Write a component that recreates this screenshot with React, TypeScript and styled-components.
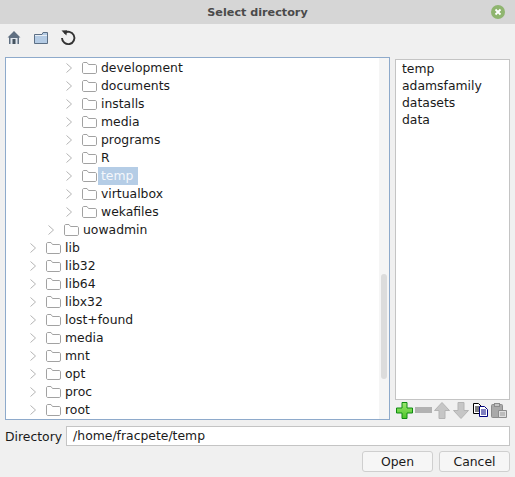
import React from "react";
import styled, { createGlobalStyle } from "styled-components";

const GlobalStyle = createGlobalStyle`
  html, body {
    margin: 0;
    padding: 0;
    background: #f0f0f0;
  }
  body {
    font-family: "DejaVu Sans", sans-serif;
    font-size: 12.4px;
    color: #1a1a1a;
  }
`;

const Dialog = styled.div`
  width: 515px;
  height: 477px;
  display: flex;
  flex-direction: column;
  overflow: hidden;
  background: #f0f0f0;
`;

const TitleBar = styled.div`
  height: 24px;
  flex: none;
  display: flex;
  align-items: center;
  justify-content: center;
  position: relative;
  background: #d6d6d6;
  font-size: 11.2px;
  font-weight: bold;
  color: #4a4a4a;
`;

const CloseButton = styled.svg`
  position: absolute;
  right: 10px;
  top: 5px;
`;

const Toolbar = styled.div`
  height: 33px;
  flex: none;
  display: flex;
  align-items: center;
  gap: 13px;
  padding-left: 7px;
  padding-bottom: 6px;
  box-sizing: border-box;
`;

const Main = styled.div`
  height: 363px;
  flex: none;
  display: flex;
  padding: 0 5px 0 5px;
  gap: 5px;
`;

const TreeBox = styled.div`
  width: 385px;
  flex: none;
  box-sizing: border-box;
  border: 1px solid #8eaacb;
  background: #fff;
  padding-top: 1px;
  position: relative;
  overflow: hidden;
`;

const Row = styled.div<{ $level: number }>`
  height: 18px;
  display: flex;
  align-items: center;
  padding-left: ${({ $level }) => 24 + ($level - 1) * 18}px;
`;

const Label = styled.span<{ $selected?: boolean }>`
  height: 18px;
  line-height: 18px;
  padding: 0 5px 0 3px;
  margin-left: 1px;
  ${({ $selected }) => $selected && "background: #b5cde6; color: #f4f7fb;"}
`;

const ScrollTrack = styled.div`
  position: absolute;
  top: 0;
  right: 0;
  bottom: 0;
  width: 10px;
  background: #f5f5f5;
`;

const ScrollThumb = styled.div`
  position: absolute;
  top: 216px;
  left: 2px;
  width: 6px;
  height: 105px;
  border-radius: 3px;
  background: #dcdcdc;
`;

const SidePanel = styled.div`
  flex: 1;
  min-width: 0;
  display: flex;
  flex-direction: column;
  padding-top: 2px;
`;

const ListBox = styled.div`
  height: 341px;
  box-sizing: border-box;
  border: 1px solid #c4c4c4;
  background: #fff;
`;

const ListItem = styled.div`
  height: 17px;
  line-height: 17px;
  padding-left: 6px;
`;

const ListTools = styled.div`
  display: flex;
  align-items: center;
  gap: 2px;
  height: 20px;
  padding-left: 1px;
`;

const DirectoryRow = styled.div`
  height: 20px;
  flex: none;
  margin-top: 6px;
  padding: 0 5px;
  display: flex;
  align-items: center;
  gap: 4px;
`;

const DirectoryInput = styled.div`
  flex: 1;
  height: 20px;
  box-sizing: border-box;
  border: 1px solid #c4c4c4;
  background: #fff;
  line-height: 18px;
  padding-left: 6px;
`;

const ButtonRow = styled.div`
  margin-top: 5px;
  padding-right: 5px;
  display: flex;
  justify-content: flex-end;
  gap: 6px;
`;

const Button = styled.div`
  width: 71px;
  height: 21px;
  box-sizing: border-box;
  border: 1px solid #cfcfcf;
  border-radius: 3px;
  background: #f6f6f6;
  display: flex;
  align-items: center;
  justify-content: center;
`;

const Chevron = () => (
  <svg width="6" height="10" viewBox="0 0 6 10" fill="none" style={{ flex: "none" }}>
    <path d="M0.5 0.5L5.5 5L0.5 9.5" stroke="#b4b4b4" strokeWidth="1" />
  </svg>
);

const Folder = () => (
  <svg width="15" height="12" viewBox="0 0 15 12" fill="none" style={{ flex: "none", marginLeft: 10 }}>
    <path
      d="M0.5 2C0.5 1 1 0.5 2 0.5H5L6.5 2.5H13C14 2.5 14.5 3 14.5 4V10C14.5 11 14 11.5 13 11.5H2C1 11.5 0.5 11 0.5 10Z"
      stroke="#a2a2a2"
      fill="#fff"
    />
  </svg>
);

const HomeIcon = () => (
  <svg width="14" height="15" viewBox="0 0 14 15">
    <path d="M7 1L13.5 7.5H12V14H2V7.5H0.5Z" fill="#5f6f81" />
    <rect x="3.5" y="8" width="7" height="6" fill="#dfe5ec" />
    <rect x="5.5" y="9" width="3" height="5" fill="#45535f" />
  </svg>
);

const FolderIcon = () => (
  <svg width="14" height="12" viewBox="0 0 14 12">
    <path d="M0.5 2.5H8L9 0.5H13.5V11.5H0.5Z" fill="#b4cbe4" stroke="#5c6f85" />
    <path d="M1 3.5H13" stroke="#e8eef5" />
  </svg>
);

const ReloadIcon = () => (
  <svg width="16" height="17" viewBox="1 0 16 17" fill="none">
    <path d="M4.2 4.2A6.2 6.2 0 1 1 2 9" stroke="#333" strokeWidth="1.9" />
    <path d="M1.5 1.5L7.2 1.2L6.4 6.6Z" fill="#333" />
  </svg>
);

const PlusIcon = () => (
  <svg width="17" height="17" viewBox="0 0 17 17">
    <defs>
      <linearGradient id="plusFill" x1="0" y1="0" x2="0" y2="1">
        <stop offset="0" stopColor="#9be870" />
        <stop offset="1" stopColor="#4cc428" />
      </linearGradient>
    </defs>
    <path d="M6 0.5H11V6H16.5V11H11V16.5H6V11H0.5V6H6Z" fill="url(#plusFill)" stroke="#0f8a12" />
  </svg>
);

const MinusIcon = () => (
  <svg width="17" height="8" viewBox="0 0 17 8">
    <rect y="1" width="17" height="6" fill="#b2b2b2" />
  </svg>
);

const ArrowIcon = ({ down }: { down?: boolean }) => (
  <svg width="17" height="17" viewBox="0 0 17 17">
    <path
      d={down ? "M5 0.5H11V8.5H15.5L8 16.5L0.5 8.5H5Z" : "M8 0.5L15.5 8.5H11V16.5H5V8.5H0.5Z"}
      fill="#c6c6c6"
      stroke="#b4b4b4"
    />
  </svg>
);

const CopyIcon = () => (
  <svg width="17" height="14" viewBox="-1 0 17 14">
    <path d="M0.5 0.5H5.5L8 3V10.5H0.5Z" fill="#fff" stroke="#000" />
    <path d="M2 4H6M2 6H6M2 8H6" stroke="#000" />
    <path d="M6.5 3.5H11.5L14.5 6.5V13.5H6.5Z" fill="#fff" stroke="#000080" />
    <path d="M8 7H13M8 9H13M8 11H13" stroke="#000080" />
  </svg>
);

const PasteIcon = () => (
  <svg width="16" height="15" viewBox="0 0 16 15">
    <rect x="0.5" y="1.5" width="11" height="13" rx="1" fill="#a9a9a9" stroke="#8c8c8c" />
    <rect x="3.5" y="0.5" width="5" height="3" fill="#c4c4c4" stroke="#8c8c8c" />
    <path d="M7.5 7.5H15.5V14.5H7.5Z" fill="#dedede" stroke="#8c8c8c" />
    <path d="M9 10H14M9 12H14" stroke="#9a9a9a" />
  </svg>
);

const rows: { name: string; level: number; selected?: boolean }[] = [
  { name: "development", level: 3 },
  { name: "documents", level: 3 },
  { name: "installs", level: 3 },
  { name: "media", level: 3 },
  { name: "programs", level: 3 },
  { name: "R", level: 3 },
  { name: "temp", level: 3, selected: true },
  { name: "virtualbox", level: 3 },
  { name: "wekafiles", level: 3 },
  { name: "uowadmin", level: 2 },
  { name: "lib", level: 1 },
  { name: "lib32", level: 1 },
  { name: "lib64", level: 1 },
  { name: "libx32", level: 1 },
  { name: "lost+found", level: 1 },
  { name: "media", level: 1 },
  { name: "mnt", level: 1 },
  { name: "opt", level: 1 },
  { name: "proc", level: 1 },
  { name: "root", level: 1 },
];

const history = ["temp", "adamsfamily", "datasets", "data"];

const App: React.FC = () => (
  <Dialog>
    <GlobalStyle />
    <TitleBar>
      Select directory
      <CloseButton width="14" height="14" viewBox="0 0 14 14">
        <circle cx="7" cy="7" r="7" fill="#8fb56f" />
        <path d="M4.5 4.5L9.5 9.5M9.5 4.5L4.5 9.5" stroke="#fff" strokeWidth="1.8" />
      </CloseButton>
    </TitleBar>
    <Toolbar>
      <HomeIcon />
      <FolderIcon />
      <ReloadIcon />
    </Toolbar>
    <Main>
      <TreeBox>
        {rows.map((row) => (
          <Row key={row.name + row.level} $level={row.level}>
            <Chevron />
            <Folder />
            <Label $selected={row.selected}>{row.name}</Label>
          </Row>
        ))}
        <ScrollTrack>
          <ScrollThumb />
        </ScrollTrack>
      </TreeBox>
      <SidePanel>
        <ListBox>
          {history.map((item) => (
            <ListItem key={item}>{item}</ListItem>
          ))}
        </ListBox>
        <ListTools>
          <PlusIcon />
          <MinusIcon />
          <ArrowIcon />
          <ArrowIcon down />
          <CopyIcon />
          <PasteIcon />
        </ListTools>
      </SidePanel>
    </Main>
    <DirectoryRow>
      Directory
      <DirectoryInput>/home/fracpete/temp</DirectoryInput>
    </DirectoryRow>
    <ButtonRow>
      <Button>Open</Button>
      <Button>Cancel</Button>
    </ButtonRow>
  </Dialog>
);

export default App;
